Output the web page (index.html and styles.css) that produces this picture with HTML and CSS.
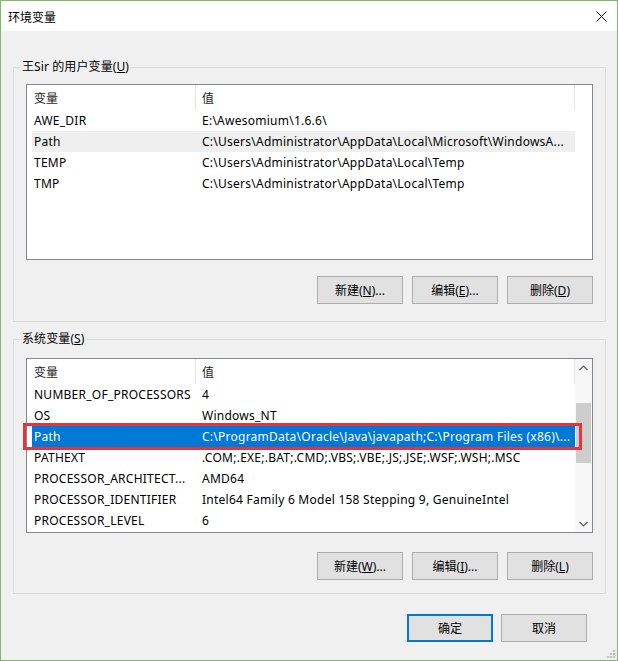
FILE: index.html
```html
<!DOCTYPE html>
<html lang="zh-CN">
<head>
    <meta charset="UTF-8">
    <title>环境变量</title>
    <link rel="stylesheet" href="styles.css">
</head>
<body>
    <div class="window">
        <div class="titlebar">
            <span class="title">环境变量</span>
            <svg class="close" width="11" height="11" viewBox="0 0 11 11">
                <path d="M0.5 0.5 L10.5 10.5 M10.5 0.5 L0.5 10.5" stroke="#111" stroke-width="1" fill="none"/>
            </svg>
        </div>

        <div class="content">
            <fieldset class="group group-user">
                <legend>王Sir 的用户变量(<u>U</u>)</legend>
                <div class="list list-user">
                    <div class="table">
                        <div class="row head"><span class="name">变量</span><span class="value">值</span></div>
                        <div class="row"><span class="name">AWE_DIR</span><span class="value">E:\Awesomium\1.6.6\</span></div>
                        <div class="row hover"><span class="name">Path</span><span class="value">C:\Users\Administrator\AppData\Local\Microsoft\WindowsA...</span></div>
                        <div class="row"><span class="name">TEMP</span><span class="value">C:\Users\Administrator\AppData\Local\Temp</span></div>
                        <div class="row"><span class="name">TMP</span><span class="value">C:\Users\Administrator\AppData\Local\Temp</span></div>
                    </div>
                    <div class="gutter"></div>
                </div>
                <div class="buttons">
                    <button class="btn">新建(<u>N</u>)...</button>
                    <button class="btn">编辑(<u>E</u>)...</button>
                    <button class="btn">删除(<u>D</u>)</button>
                </div>
            </fieldset>

            <fieldset class="group group-system">
                <legend>系统变量(<u>S</u>)</legend>
                <div class="list list-system">
                    <div class="table">
                        <div class="row head"><span class="name">变量</span><span class="value">值</span></div>
                        <div class="row"><span class="name">NUMBER_OF_PROCESSORS</span><span class="value">4</span></div>
                        <div class="row"><span class="name">OS</span><span class="value">Windows_NT</span></div>
                        <div class="row selected"><span class="name">Path</span><span class="value">C:\ProgramData\Oracle\Java\javapath;C:\Program Files (x86)\...</span></div>
                        <div class="row"><span class="name">PATHEXT</span><span class="value">.COM;.EXE;.BAT;.CMD;.VBS;.VBE;.JS;.JSE;.WSF;.WSH;.MSC</span></div>
                        <div class="row"><span class="name">PROCESSOR_ARCHITECT...</span><span class="value">AMD64</span></div>
                        <div class="row"><span class="name">PROCESSOR_IDENTIFIER</span><span class="value">Intel64 Family 6 Model 158 Stepping 9, GenuineIntel</span></div>
                        <div class="row"><span class="name">PROCESSOR_LEVEL</span><span class="value">6</span></div>
                        <div class="mark"></div>
                    </div>
                    <div class="scrollbar">
                        <div class="arrow">
                            <svg width="9" height="6" viewBox="0 0 9 6"><path d="M0.5 5 L4.5 1 L8.5 5" stroke="#606060" stroke-width="1.2" fill="none"/></svg>
                        </div>
                        <div class="track"><div class="thumb"></div></div>
                        <div class="arrow">
                            <svg width="9" height="6" viewBox="0 0 9 6"><path d="M0.5 1 L4.5 5 L8.5 1" stroke="#606060" stroke-width="1.2" fill="none"/></svg>
                        </div>
                    </div>
                </div>
                <div class="buttons buttons-system">
                    <button class="btn">新建(<u>W</u>)...</button>
                    <button class="btn">编辑(<u>I</u>)...</button>
                    <button class="btn">删除(<u>L</u>)</button>
                </div>
            </fieldset>

            <div class="footer">
                <button class="btn default">确定</button>
                <button class="btn">取消</button>
            </div>
        </div>

        <svg class="grip" width="11" height="11" viewBox="0 0 11 11">
            <rect x="8" y="2" width="2" height="2" fill="#bcbcbc"/>
            <rect x="5" y="5" width="2" height="2" fill="#bcbcbc"/>
            <rect x="8" y="5" width="2" height="2" fill="#bcbcbc"/>
            <rect x="2" y="8" width="2" height="2" fill="#bcbcbc"/>
            <rect x="5" y="8" width="2" height="2" fill="#bcbcbc"/>
            <rect x="8" y="8" width="2" height="2" fill="#bcbcbc"/>
        </svg>
    </div>
</body>
</html>
```

FILE: styles.css
```css
body {
    margin: 0;
    font-family: "Noto Sans", "Noto Sans CJK SC", sans-serif;
    font-size: 12px;
    color: #000;
}
.window {
    position: relative;
    width: 616px;
    height: 659px;
    border: 1px solid #83b96a;
    background: #f0f0f0;
}
.titlebar {
    height: 30px;
    background: #fff;
    display: flex;
    align-items: center;
    justify-content: space-between;
    padding: 0 10px 0 7px;
}
.title {
    font-family: "Noto Sans CJK SC", sans-serif;
    font-size: 12px;
}
.close {
    margin-top: 1px;
}
.content {
    padding: 28px 11px 0 12px;
}
.group {
    margin: 0;
    padding: 0 12px 17px 12px;
    border: 1px solid #dcdcdc;
    min-width: 0;
}
.group legend {
    margin-left: -6px;
    padding: 0 2px;
    line-height: 16px;
    letter-spacing: 0.1px;
}
.group-system {
    margin-top: 9px;
    padding-bottom: 13px;
}
.list {
    display: flex;
    background: #fff;
    border: 1px solid #828790;
    margin-top: 9px;
    height: 174px;
}
.list-system {
    margin-top: 11px;
    height: 173px;
}
.table {
    position: relative;
    flex: 1;
    padding-left: 5px;
}
.gutter {
    width: 17px;
}
.row {
    display: grid;
    grid-template-columns: 164px 1fr;
    height: 21px;
    line-height: 21px;
    white-space: nowrap;
    letter-spacing: 0.25px;
}
.row span {
    overflow: hidden;
}
.row .name {
    padding-left: 2px;
}
.row .value {
    padding-left: 6px;
}
.row.head {
    height: 25px;
    line-height: 25px;
    font-family: "Noto Sans CJK SC", sans-serif;
    color: #1e1e1e;
    letter-spacing: 0;
}
.row.head .name {
    border-right: 1px solid #e5e5e5;
}
.row.head .value {
    border-right: 1px solid #e5e5e5;
}
.row.hover {
    background: #efefef;
}
.row.selected {
    background: #0078d7;
    color: #fff;
}
.mark {
    position: absolute;
    left: -4px;
    top: 64px;
    width: 553px;
    height: 21px;
    border: 3px solid #e8333b;
}
.scrollbar {
    width: 17px;
    display: flex;
    flex-direction: column;
    background: #f7f7f7;
}
.arrow {
    height: 17px;
    display: flex;
    align-items: center;
    justify-content: center;
}
.track {
    flex: 1;
    padding: 27px 1px 0 1px;
}
.thumb {
    height: 60px;
    background: #cdcdcd;
}
.buttons {
    display: flex;
    justify-content: flex-end;
    gap: 9px;
    margin-top: 16px;
}
.buttons-system {
    margin-top: 19px;
}
.btn {
    width: 86px;
    height: 28px;
    padding: 0;
    background: #e1e1e1;
    border: 1px solid #adadad;
    font-family: "Noto Sans", "Noto Sans CJK SC", sans-serif;
    font-size: 12px;
    color: #000;
}
.btn.default {
    border: 2px solid #0078d7;
}
.footer {
    display: flex;
    justify-content: flex-end;
    gap: 8px;
    margin-top: 20px;
    padding-right: 19px;
}
.grip {
    position: absolute;
    right: 1px;
    bottom: 1px;
}
```
